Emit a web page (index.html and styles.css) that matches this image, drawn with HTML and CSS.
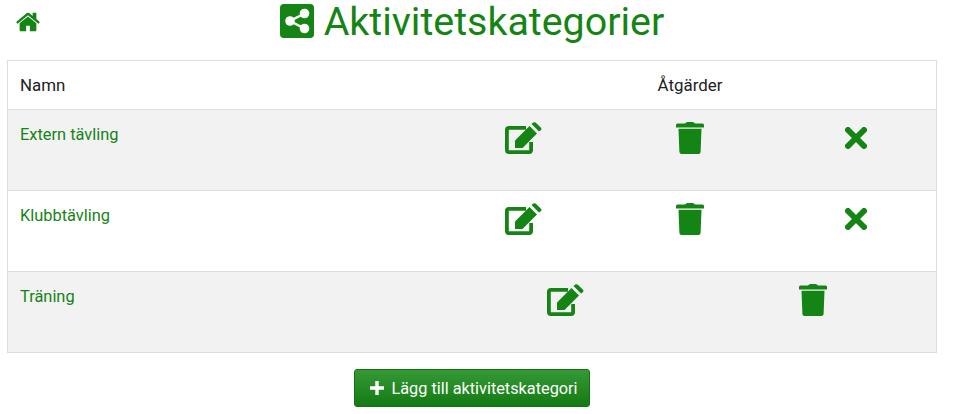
FILE: index.html
```html
<!DOCTYPE html>
<html lang="sv">
<head>
    <meta charset="UTF-8">
    <title>Aktivitetskategorier</title>
    <link rel="stylesheet" href="styles.css">
</head>
<body>
    <svg class="defs" width="0" height="0">
        <symbol id="i-edit" viewBox="0 0 37 33">
            <path d="M21 5.900H4A2.100 2.100 0 0 0 1.900 8V28A2.100 2.100 0 0 0 4 30.100H24A2.100 2.100 0 0 0 26.100 28V20" fill="none" stroke="currentColor" stroke-width="3.800"/>
            <path d="M10 26V18.500L24.500 4 32 11.500 17.500 26Z" fill="currentColor"/>
            <path d="M26.500 2 28.200 .6Q29.400 -.2 30.600 .6L36 5.800Q36.800 7 36 8L34 9.500Z" fill="currentColor"/>
        </symbol>
        <symbol id="i-trash" viewBox="0 0 28 32">
            <path d="M0 3Q0 1.500 1.500 1.500H9Q10 0 11.500 0H16.500Q18 0 19 1.500H26.500Q28 1.500 28 3V5.500H0Z" fill="currentColor"/>
            <path d="M2.500 6.800H25.500L24.600 30Q24.400 32 22.500 32H5.500Q3.600 32 3.400 30Z" fill="currentColor"/>
        </symbol>
        <symbol id="i-times" viewBox="0 0 22 22">
            <path d="M3 3 19 19M19 3 3 19" fill="none" stroke="currentColor" stroke-width="6" stroke-linecap="round"/>
        </symbol>
    </svg>

    <div class="container">
        <header class="page-head">
            <a class="home" href="#">
                <svg viewBox="0 0 1792 1792" width="26" height="26"><path fill="currentColor" d="M1472 992v480q0 26-19 45t-45 19h-384v-384h-256v384h-384q-26 0-45-19t-19-45v-480q0-1 .5-3t.5-3l575-474 575 474q1 2 1 6zm223-69l-62 74q-8 9-21 11h-3q-13 0-21-7l-692-577-692 577q-12 8-24 7-13-2-21-11l-62-74q-8-10-7-23.5t11-21.5l719-599q32-26 76-26t76 26l244 204v-195q0-14 9-23t23-9h192q14 0 23 9t9 23v408l219 182q10 8 11 21.5t-7 23.5z"/></svg>
            </a>
            <h1>
                <svg class="title-icon" viewBox="0 0 34 34" width="34" height="34">
                    <rect width="34" height="34" rx="4" fill="currentColor"/>
                    <path d="M24.500 9.500 10 17 24.500 24.500" fill="none" stroke="#fff" stroke-width="2.500"/>
                    <circle cx="24.500" cy="9.500" r="4.800" fill="#fff"/>
                    <circle cx="10" cy="17" r="4.800" fill="#fff"/>
                    <circle cx="24.500" cy="24.500" r="4.800" fill="#fff"/>
                </svg>
                Aktivitetskategorier
            </h1>
        </header>

        <div class="list">
            <div class="row row-head">
                <div class="name">Namn</div>
                <div class="actions">Åtgärder</div>
            </div>
            <div class="row">
                <a class="name" href="#">Extern tävling</a>
                <div class="actions">
                    <a href="#"><svg class="ico-edit"><use href="#i-edit"/></svg></a>
                    <a href="#"><svg class="ico-trash"><use href="#i-trash"/></svg></a>
                    <a href="#"><svg class="ico-times"><use href="#i-times"/></svg></a>
                </div>
            </div>
            <div class="row">
                <a class="name" href="#">Klubbtävling</a>
                <div class="actions">
                    <a href="#"><svg class="ico-edit"><use href="#i-edit"/></svg></a>
                    <a href="#"><svg class="ico-trash"><use href="#i-trash"/></svg></a>
                    <a href="#"><svg class="ico-times"><use href="#i-times"/></svg></a>
                </div>
            </div>
            <div class="row">
                <a class="name" href="#">Träning</a>
                <div class="actions">
                    <a href="#"><svg class="ico-edit"><use href="#i-edit"/></svg></a>
                    <a href="#"><svg class="ico-trash"><use href="#i-trash"/></svg></a>
                </div>
            </div>
        </div>

        <div class="add-wrap">
            <button class="btn-add" type="button">
                <svg viewBox="0 0 14 14" width="14" height="14"><path d="M7 0V14M0 7H14" stroke="currentColor" stroke-width="3.400" fill="none"/></svg>
                Lägg till aktivitetskategori
            </button>
        </div>
    </div>
</body>
</html>
```

FILE: styles.css
```css
body {
    font-family: Roboto, "Liberation Sans", sans-serif;
    font-size: 16.4px;
    color: #222;
    background-color: #fff;
    margin: 0;
}
a {
    color: #148414;
    text-decoration: none;
}
.defs {
    position: absolute;
}
.container {
    margin: 0 23px 0 7px;
}
.page-head {
    position: relative;
    height: 60px;
}
.home {
    position: absolute;
    left: 8px;
    top: 9px;
}
h1 {
    margin: 0;
    padding-left: 2px;
    font-size: 39.4px;
    font-weight: 400;
    line-height: 44px;
    color: #148414;
    display: flex;
    justify-content: center;
    align-items: center;
    gap: 10px;
}
.title-icon {
    margin: 0 0 3px -2px;
}
.list {
    border: 1px solid #ddd;
}
.row {
    display: flex;
    height: 80px;
    border-top: 1px solid #ddd;
}
.row:nth-child(even) {
    background-color: #f2f2f2;
}
.row-head {
    height: 48px;
    border-top: none;
    font-size: 16.9px;
    font-weight: 450;
    align-items: center;
}
.name {
    width: 436px;
    flex: none;
    padding: 15px 0 0 12px;
    box-sizing: border-box;
}
.row-head .name {
    padding-top: 0;
}
.actions {
    flex: 1;
    display: flex;
}
.row-head .actions {
    justify-content: center;
}
.row:last-child .actions {
    padding-left: 1px;
}
.actions a {
    flex: 1;
    text-align: center;
    padding-top: 12px;
}
.ico-edit {
    width: 37px;
    height: 33px;
    margin-right: 5px;
}
.ico-trash {
    width: 28px;
    height: 32px;
}
.ico-times {
    width: 22px;
    height: 22px;
    margin: 5px 0 0 3px;
}
.add-wrap {
    display: flex;
    justify-content: center;
    padding-top: 16px;
}
.btn-add {
    display: flex;
    align-items: center;
    gap: 7px;
    height: 38px;
    padding: 0 11px 0 15px;
    font-family: inherit;
    font-size: 16.3px;
    color: #fff;
    background: linear-gradient(to bottom, #359a35, #147a14);
    border: 1px solid #127012;
    border-radius: 3px;
}
```
